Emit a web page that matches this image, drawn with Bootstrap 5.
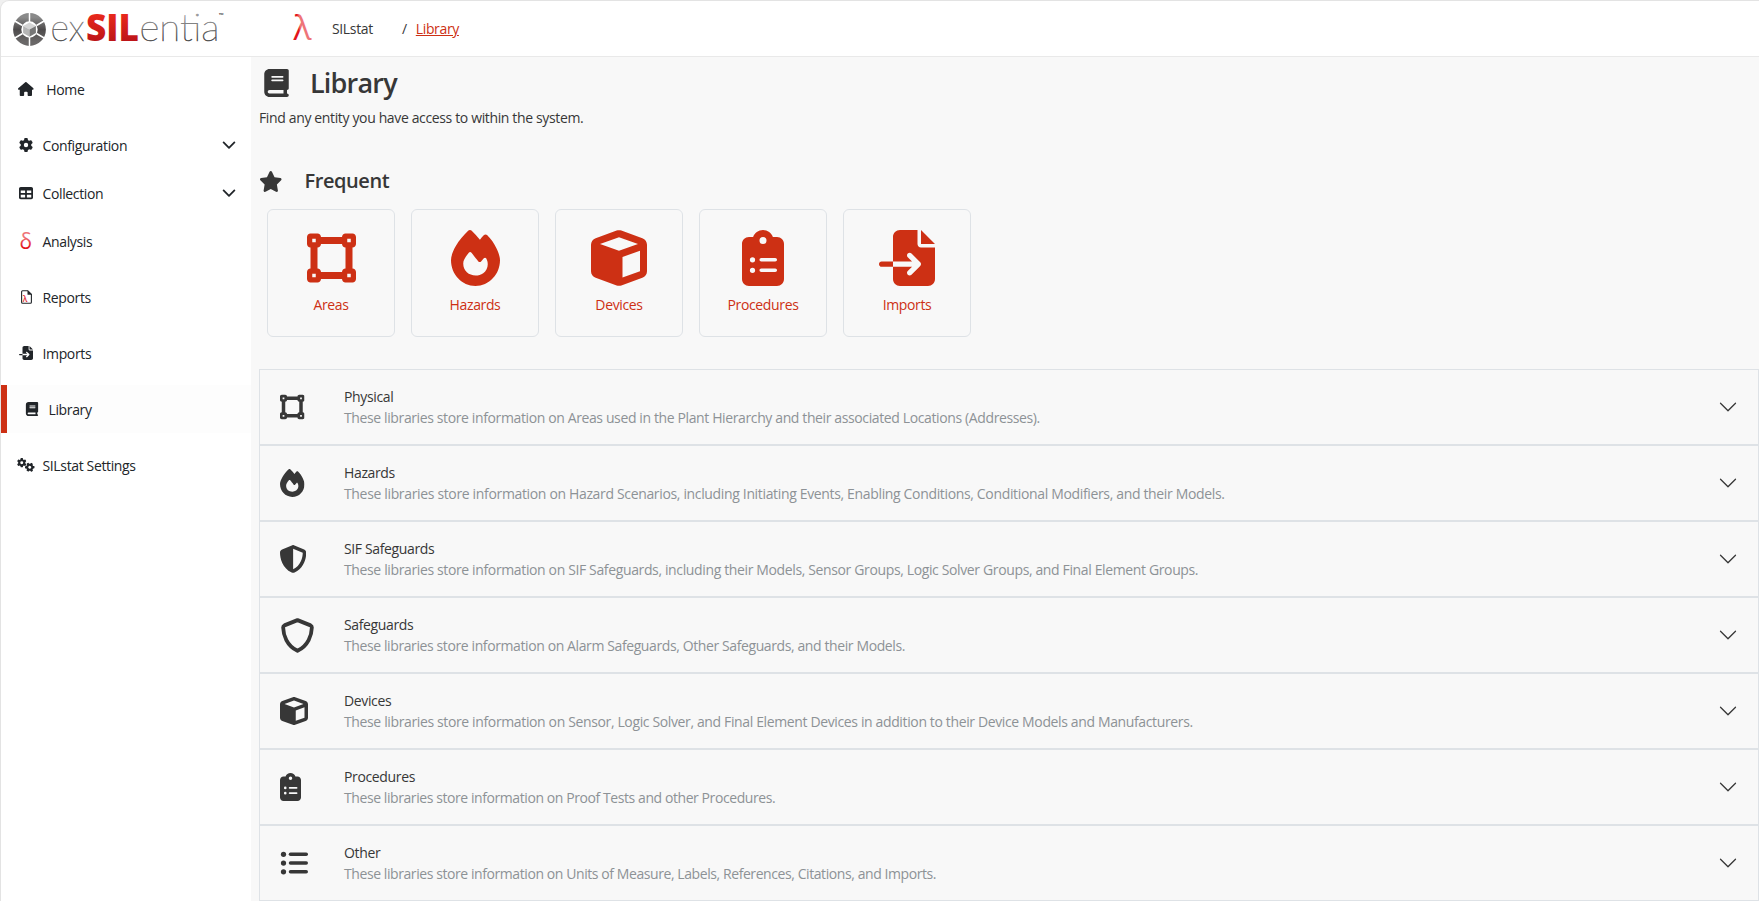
<!DOCTYPE html>
<html lang="en">
<head>
<meta charset="utf-8">
<title>Library - SILstat</title>
<link href="https://cdn.jsdelivr.net/npm/bootstrap@5.3.0/dist/css/bootstrap.min.css" rel="stylesheet">
<style>
:root{--brand:#cd3014;--ink:#373737;--line:#dee2e6}
body{font-family:"Open Sans","Noto Sans",sans-serif;font-size:14px;line-height:21px;letter-spacing:-.36px;color:var(--ink);background:#f0f0f0;height:901px;overflow:hidden}
svg{display:block;flex:none;fill:currentColor}
.shell{height:901px;border:solid #e3e3e3;border-width:1px 0 0 1px;border-top-left-radius:9px;background:#fff;overflow:hidden}
.topbar{height:56px;border-bottom:1px solid #e9e9e9}
.brand-area{width:251px;padding-left:11px}
.side{width:250px;padding-top:8px;color:#212529}
.side a{height:48px;color:inherit;text-decoration:none;padding-left:18px}
.side a.gap-after{margin-bottom:8px}
.side .ico{width:23.5px}
.side a.active{border-left:6px solid var(--brand);background:#fdfdfd}
.main-area{background:#f8f8f8;padding-left:8px;min-width:0}
.page-head{height:152px;padding-top:9px}
.tile{width:128px;height:128px;border:1px solid var(--line);border-radius:6px;color:var(--brand);text-decoration:none;padding-top:20px}
.tile span{margin-top:8px}
.lib-item{height:76px;border:1px solid var(--line);padding:0 20px}
.lib-item .ico{width:64px}
.lib-item p{color:#8d9296;letter-spacing:-.38px}
.lib-item:nth-child(2) p{letter-spacing:-.344px}
.lib-item:nth-child(3) p,.lib-item:nth-child(5) p{letter-spacing:-.367px}
.lib-item:nth-child(4) p{letter-spacing:-.395px}
.lib-item:nth-child(n+6) p{letter-spacing:-.42px}
.t1{font-size:27px;line-height:34px;font-weight:600;letter-spacing:-.8px}
.t2{font-size:20px;line-height:26px;font-weight:600;letter-spacing:-.42px}
.crumb{color:var(--brand)}
</style>
</head>
<body>
<svg width="0" height="0" class="position-absolute top-0">
<defs>
<linearGradient id="gGray" x1="0" y1="0" x2="0" y2="1"><stop offset=".3" stop-color="#999"/><stop offset=".8" stop-color="#4c4c4c"/></linearGradient>
<linearGradient id="gRed" x1="0" y1="0" x2="0" y2="1"><stop offset=".25" stop-color="#e8281c"/><stop offset=".85" stop-color="#b71218"/></linearGradient>
<linearGradient id="gRing" x1="0" y1="0" x2="0" y2="1"><stop offset="0" stop-color="#8a8a8a"/><stop offset=".5" stop-color="#4d4a4b"/><stop offset="1" stop-color="#6a6868"/></linearGradient>
<linearGradient id="gLam" x1="0" y1="1" x2="1" y2=".75"><stop offset=".38" stop-color="#e3141c"/><stop offset=".5" stop-color="#ee7478"/></linearGradient>
<linearGradient id="gDel" x1="0" y1="0" x2="0" y2="1"><stop offset=".4" stop-color="#ee7478"/><stop offset=".75" stop-color="#e3141c"/></linearGradient>
</defs>
<symbol id="book" viewBox="0 0 448 512"><path fill-rule="evenodd" d="M96 0C43 0 0 43 0 96V416c0 53 43 96 96 96H416c17.700 0 32-14.300 32-32s-14.300-32-32-32V384c17.700 0 32-14.300 32-32V32c0-17.700-14.300-32-32-32H96zm0 384H352v64H96c-17.700 0-32-14.300-32-32s14.300-32 32-32zM128 144c0-8.800 7.200-16 16-16H336c8.800 0 16 7.200 16 16s-7.200 16-16 16H144c-8.800 0-16-7.200-16-16zm16 48H336c8.800 0 16 7.200 16 16s-7.200 16-16 16H144c-8.800 0-16-7.200-16-16s7.200-16 16-16z"/></symbol>
<symbol id="star" viewBox="0 0 576 512"><path d="M316.900 18C311.600 7 300.400 0 288.100 0s-23.400 7-28.800 18L195 150.300 51.400 171.500c-12 1.800-22 10.200-25.700 21.700s-.7 24.200 7.900 32.700L137.800 329 113.200 474.700c-2 12 3 24.200 12.900 31.300s23 8 33.800 2.300l128.300-68.500 128.300 68.500c10.800 5.700 23.900 4.900 33.800-2.300s14.900-19.300 12.900-31.300L438.500 329 542.700 225.900c8.600-8.500 11.700-21.200 7.900-32.700s-13.700-19.900-25.700-21.700L381.200 150.300 316.900 18z"/></symbol>
<symbol id="area" viewBox="0 0 448 512"><path fill-rule="evenodd" d="M352 32c-17.700 0-32 14.300-32 32H128c0-17.700-14.300-32-32-32H32C14.300 32 0 46.300 0 64v64c0 17.700 14.300 32 32 32V352c-17.700 0-32 14.300-32 32v64c0 17.700 14.300 32 32 32H96c17.700 0 32-14.300 32-32H320c0 17.700 14.300 32 32 32h64c17.700 0 32-14.300 32-32V384c0-17.700-14.300-32-32-32V160c17.700 0 32-14.300 32-32V64c0-17.700-14.300-32-32-32H352zM96 160c17.700 0 32-14.300 32-32H320c0 17.700 14.300 32 32 32V352c-17.700 0-32 14.300-32 32H128c0-17.700-14.300-32-32-32V160zM48 80H80v32H48zM368 80h32v32H368zM48 400H80v32H48zM368 400h32v32H368z"/></symbol>
<symbol id="fire" viewBox="0 0 448 512"><path fill-rule="evenodd" d="M159.300 5.400c7.800-7.300 19.900-7.200 27.700 .1c27.600 25.900 53.500 53.800 77.700 84c11-14.400 23.500-30.100 37-42.900c7.900-7.400 20.100-7.400 28 .1c34.600 33 63.900 76.600 84.500 118c20.300 40.800 33.800 82.500 33.800 111.900C448 404.200 348.200 512 224 512C98.400 512 0 404.100 0 276.500c0-38.400 17.800-85.300 45.400-131.700C73.300 97.700 112.700 48.600 159.300 5.400zM225.700 416c25.300 0 47.700-7 68.800-21c42.100-29.400 53.400-88.200 28.100-134.400c-4.500-9-16-9.600-22.500-2l-25.200 29.300c-6.600 7.600-18.500 7.400-24.700-.5c-16.500-21-46-58.500-62.800-79.800c-6.300-8-18.300-8.100-24.700-.1c-33.800 42.500-50.800 69.300-50.800 99.400C112 375.400 162.600 416 225.700 416z"/></symbol>
<symbol id="cube" viewBox="0 0 512 512"><path fill-rule="evenodd" d="M234.500 5.700c13.900-5 29.100-5 43.100 0l192 68.600C495 83.400 512 107.500 512 134.600V377.400c0 27-17 51.200-42.500 60.300l-192 68.600c-13.900 5-29.100 5-43.100 0l-192-68.600C17 428.600 0 404.500 0 377.400V134.600c0-27 17-51.200 42.500-60.300l192-68.600zM256 66L82.300 128 256 190l173.700-62L256 66zm32 368.600l160-57.100v-188L288 246.600v188z"/></symbol>
<symbol id="clip" viewBox="0 0 384 512"><path fill-rule="evenodd" d="M192 0c-41.800 0-77.400 26.700-90.500 64H64C28.700 64 0 92.700 0 128V448c0 35.300 28.700 64 64 64H320c35.300 0 64-28.700 64-64V128c0-35.300-28.700-64-64-64H282.500C269.400 26.700 233.800 0 192 0zm0 64a32 32 0 1 1 0 64 32 32 0 1 1 0-64zM72 272a24 24 0 1 1 48 0 24 24 0 1 1 -48 0zm104-16H304c8.800 0 16 7.200 16 16s-7.200 16-16 16H176c-8.800 0-16-7.200-16-16s7.200-16 16-16zM72 368a24 24 0 1 1 48 0 24 24 0 1 1 -48 0zm88 0c0-8.800 7.200-16 16-16H304c8.800 0 16 7.200 16 16s-7.200 16-16 16H176c-8.800 0-16-7.200-16-16z"/></symbol>
<symbol id="import" viewBox="0 0 512 512"><path d="M128 64c0-35.300 28.700-64 64-64H352V128c0 17.700 14.300 32 32 32H512V448c0 35.300-28.700 64-64 64H192c-35.300 0-64-28.700-64-64V336H302.100l-39 39c-9.400 9.400-9.400 24.600 0 33.900s24.600 9.400 33.900 0l80-80c9.400-9.400 9.400-24.600 0-33.900l-80-80c-9.400-9.400-24.600-9.400-33.900 0s-9.400 24.600 0 33.900l39 39H128V64zm0 224v48H24c-13.300 0-24-10.700-24-24s10.700-24 24-24H128zM512 128H384V0L512 128z"/></symbol>
<symbol id="halfshield" viewBox="16 0 480 512"><path fill-rule="evenodd" d="M256 0c4.600 0 9.200 1 13.400 2.900L457.700 82.800c22 9.300 38.400 31 38.300 57.200c-.5 99.200-41.300 280.700-213.600 363.200c-16.700 8-36.100 8-52.800 0C57.300 420.700 16.500 239.200 16 140c-.1-26.200 16.300-47.900 38.300-57.200L242.700 2.900C246.800 1 251.400 0 256 0zm0 66.800V444.800C394 378 431.100 230.100 432 141.400L256 66.800z"/></symbol>
<symbol id="shield" viewBox="16 0 480 512"><path fill="none" stroke="currentColor" stroke-width="56" stroke-linejoin="round" d="M256 31L447 108Q466 117 466 140C463 250 414 405 256 480C98 405 49 250 46 140Q46 117 65 108Z"/></symbol>
<symbol id="list" viewBox="0 0 512 512"><circle cx="64" cy="96" r="48"/><circle cx="64" cy="256" r="48"/><circle cx="64" cy="416" r="48"/><rect x="160" y="64" width="352" height="64" rx="32"/><rect x="160" y="224" width="352" height="64" rx="32"/><rect x="160" y="384" width="352" height="64" rx="32"/></symbol>
<symbol id="home" viewBox="0 0 576 512"><path d="M575.800 255.500c0 18-15 32.100-32 32.100h-32l.7 160.200c0 2.700-.2 5.400-.5 8.100V472c0 22.100-17.900 40-40 40H392c-22.100 0-40-17.900-40-40V384c0-17.700-14.300-32-32-32H256c-17.700 0-32 14.300-32 32v88c0 22.100-17.900 40-40 40H104c-22.100 0-40-17.900-40-40V287.600H32c-18 0-32-14-32-32.100c0-9 3-17 10-24L266.400 8c7-7 15-8 22-8s15 2 21 7L564.800 231.500c8 7 12 15 11 24z"/></symbol>
<symbol id="gear" viewBox="0 0 512 512"><path fill-rule="evenodd" d="M495.900 166.600c3.200 8.700 .5 18.400-6.400 24.600l-43.300 39.400c1.100 8.300 1.700 16.800 1.700 25.400s-.6 17.100-1.700 25.400l43.300 39.400c6.900 6.200 9.600 15.900 6.400 24.600c-4.400 11.900-9.700 23.300-15.800 34.300l-4.700 8.100c-6.600 11-14 21.400-22.100 31.200c-5.900 7.200-15.700 9.600-24.500 6.800l-55.700-17.700c-13.400 10.300-28.200 18.900-44 25.400l-12.500 57.100c-2 9.100-9 16.300-18.200 17.800c-13.800 2.300-28 3.500-42.500 3.500s-28.700-1.200-42.500-3.500c-9.200-1.500-16.200-8.700-18.200-17.800l-12.500-57.100c-15.800-6.500-30.600-15.100-44-25.400L83.100 425.900c-8.800 2.800-18.600 .3-24.500-6.800c-8.100-9.800-15.500-20.200-22.100-31.200l-4.700-8.100c-6.100-11-11.400-22.400-15.800-34.300c-3.200-8.700-.5-18.400 6.400-24.600l43.300-39.400C64.600 273.100 64 264.600 64 256s.6-17.100 1.700-25.400L22.400 191.200c-6.900-6.200-9.600-15.900-6.400-24.600c4.400-11.900 9.700-23.300 15.800-34.300l4.700-8.100c6.600-11 14-21.400 22.100-31.200c5.900-7.200 15.700-9.600 24.500-6.800l55.700 17.700c13.400-10.300 28.200-18.900 44-25.400l12.500-57.100c2-9.100 9-16.300 18.200-17.800C227.300 1.200 241.500 0 256 0s28.700 1.200 42.500 3.500c9.200 1.500 16.200 8.700 18.200 17.800l12.500 57.100c15.800 6.500 30.600 15.100 44 25.400l55.700-17.700c8.800-2.800 18.600-.3 24.500 6.800c8.100 9.800 15.500 20.200 22.100 31.200l4.700 8.100c6.100 11 11.400 22.400 15.800 34.300zM256 336a80 80 0 1 0 0-160 80 80 0 1 0 0 160z"/></symbol>
<symbol id="grid" viewBox="0 0 512 512"><path fill-rule="evenodd" d="M64 32C28.700 32 0 60.700 0 96V416c0 35.300 28.700 64 64 64H448c35.300 0 64-28.700 64-64V96c0-35.300-28.700-64-64-64H64zM64 160H224v96H64zM64 320H224v96H64zM288 320H448v96H288zM288 160H448v96H288z"/></symbol>
<symbol id="chev" viewBox="0 0 16 16"><path d="M1.646 4.646a.5.5 0 0 1 .708 0L8 10.293l5.646-5.647a.5.5 0 0 1 .708.708l-6 6a.5.5 0 0 1-.708 0l-6-6a.5.5 0 0 1 0-.708z"/></symbol>
<symbol id="chevs" viewBox="0 0 14 14"><path fill="none" stroke="currentColor" stroke-width="1.800" stroke-linecap="round" stroke-linejoin="round" d="M1.600 4.400L7 9.800l5.400-5.400"/></symbol>
</svg>

<div class="shell d-flex flex-column">
  <header class="topbar d-flex align-items-center flex-shrink-0">
    <div class="brand-area">
      <svg width="230" height="54" viewBox="12 1 230 54">
        <circle cx="29.500" cy="28.500" r="12.300" fill="none" stroke="url(#gRing)" stroke-width="8.200"/>
        <path d="M29.500 11v10M29.500 36v10M14 19.500l8.500 5M45 19.500l-8.500 5M14 37.500l8.500-5M45 37.500l-8.500-5" stroke="#fff" stroke-width="1.500"/>
        <path d="M29.500 21.500l6.400 3.500-6.400 3.500-6.400-3.500z" fill="#d4d4d4"/><path d="M23.100 25l6.400 3.500v7.200l-6.400-3.600z" fill="#b5b5b5"/><path d="M35.900 25l-6.400 3.500v7.200l6.400-3.600z" fill="#777"/>
        <g font-family="Lato,'Open Sans',sans-serif" letter-spacing="0">
          <text x="50.500" y="40" font-size="38" font-weight="100" fill="url(#gGray)" stroke="url(#gGray)" stroke-width=".6" textLength="34" lengthAdjust="spacingAndGlyphs">ex</text>
          <text x="86" y="40" font-size="36.500" font-weight="800" font-family="'Open Sans'" fill="url(#gRed)" textLength="53" lengthAdjust="spacingAndGlyphs">SIL</text>
          <text x="139.500" y="40" font-size="38" font-weight="100" fill="url(#gGray)" stroke="url(#gGray)" stroke-width=".6" textLength="80" lengthAdjust="spacingAndGlyphs">entia</text>
          <text x="218.500" y="17" font-size="6.500" font-weight="700" fill="#555">™</text>
        </g>
      </svg>
    </div>
    <svg width="24" height="50" viewBox="0 -8 24 50" style="margin-left:39px"><text x="2.500" y="27.500" font-size="34" letter-spacing="0" font-family="Open Sans" fill="url(#gLam)" textLength="18" lengthAdjust="spacingAndGlyphs">λ</text></svg>
    <span style="width:70px;margin-left:17px">SILstat</span>
    <span style="margin-right:9px">/</span><a class="crumb" href="#">Library</a>
  </header>

  <div class="d-flex flex-grow-1" style="min-height:0">
    <nav class="side d-flex flex-column flex-shrink-0">
      <a href="#" class="gap-after d-flex align-items-center"><svg width="15.750" height="14" style="margin:0 12.500px 0 -1px"><use href="#home"/></svg>Home</a>
      <a href="#" class="d-flex align-items-center"><span class="ico"><svg width="14" height="14"><use href="#gear"/></svg></span>Configuration<svg class="ms-auto" style="margin-right:15px" width="14" height="14"><use href="#chevs"/></svg></a>
      <a href="#" class="d-flex align-items-center"><span class="ico"><svg width="14" height="14"><use href="#grid"/></svg></span>Collection<svg class="ms-auto" style="margin-right:15px" width="14" height="14"><use href="#chevs"/></svg></a>
      <a href="#" class="gap-after d-flex align-items-center"><span class="ico"><svg width="14" height="28" viewBox="0 -5 14 28"><text x="0.500" y="16.500" font-size="21.500" letter-spacing="0" font-family="Open Sans" fill="url(#gDel)" textLength="12.500" lengthAdjust="spacingAndGlyphs">δ</text></svg></span>Analysis</a>
      <a href="#" class="gap-after d-flex align-items-center"><span class="ico"><svg width="14" height="14" viewBox="0 0 14 14"><path d="M2.600 1.700q0-1 1-1h5.200l3.600 3.600v8q0 1-1 1H3.600q-1 0-1-1z" fill="none" stroke="currentColor" stroke-width="1.100"/><path d="M8.500.5l4.200 4.200H8.500z"/><text x="3.800" y="12.400" font-size="8" font-weight="600" fill="#e02a30">λ</text></svg></span>Reports</a>
      <a href="#" class="gap-after d-flex align-items-center"><span class="ico"><svg width="14" height="14"><use href="#import"/></svg></span>Imports</a>
      <a href="#" class="gap-after active d-flex align-items-center"><span class="ico ps-0"><svg width="14" height="14"><use href="#book"/></svg></span>Library</a>
      <a href="#" class="d-flex align-items-center"><span class="ico"><svg width="18" height="14" viewBox="0 0 18 14" style="margin-left:-2px"><use href="#gear" width="9.500" height="9.500"/><use href="#gear" x="8" y="4.500" width="9.500" height="9.500" transform="rotate(30 12.750 9.250)"/></svg></span>SILstat Settings</a>
    </nav>

    <main class="main-area flex-grow-1">
      <div class="page-head d-flex flex-column">
        <div class="d-flex align-items-center" style="padding-left:5px"><svg width="25" height="28"><use href="#book"/></svg><h1 class="t1 mb-0" style="margin-left:21px">Library</h1></div>
        <p class="mb-0" style="margin-top:7px">Find any entity you have access to within the system.</p>
        <div class="d-flex align-items-center mt-auto" style="margin-bottom:15px"><svg width="23.500" height="21"><use href="#star"/></svg><h2 class="t2 mb-0" style="margin-left:22px">Frequent</h2></div>
      </div>
      <div class="d-flex gap-3 ps-2">
        <a href="#" class="tile d-flex flex-column align-items-center"><svg width="49" height="56"><use href="#area"/></svg><span>Areas</span></a>
        <a href="#" class="tile d-flex flex-column align-items-center"><svg width="49" height="56"><use href="#fire"/></svg><span>Hazards</span></a>
        <a href="#" class="tile d-flex flex-column align-items-center"><svg width="56" height="56"><use href="#cube"/></svg><span>Devices</span></a>
        <a href="#" class="tile d-flex flex-column align-items-center"><svg width="42" height="56"><use href="#clip"/></svg><span>Procedures</span></a>
        <a href="#" class="tile d-flex flex-column align-items-center"><svg width="56" height="56"><use href="#import"/></svg><span>Imports</span></a>
      </div>
      <div style="margin-top:32px">
        <div class="lib-item d-flex align-items-center"><div class="ico"><svg width="24.500" height="28"><use href="#area"/></svg></div><div>Physical<p class="mb-0">These libraries store information on Areas used in the Plant Hierarchy and their associated Locations (Addresses).</p></div><svg class="ms-auto" width="20" height="20"><use href="#chev"/></svg></div>
        <div class="lib-item d-flex align-items-center"><div class="ico"><svg width="24.500" height="28"><use href="#fire"/></svg></div><div>Hazards<p class="mb-0">These libraries store information on Hazard Scenarios, including Initiating Events, Enabling Conditions, Conditional Modifiers, and their Models.</p></div><svg class="ms-auto" width="20" height="20"><use href="#chev"/></svg></div>
        <div class="lib-item d-flex align-items-center"><div class="ico"><svg width="26.250" height="28"><use href="#halfshield"/></svg></div><div>SIF Safeguards<p class="mb-0">These libraries store information on SIF Safeguards, including their Models, Sensor Groups, Logic Solver Groups, and Final Element Groups.</p></div><svg class="ms-auto" width="20" height="20"><use href="#chev"/></svg></div>
        <div class="lib-item d-flex align-items-center"><div class="ico"><svg width="33" height="35" style="margin-left:1px"><use href="#shield"/></svg></div><div>Safeguards<p class="mb-0">These libraries store information on Alarm Safeguards, Other Safeguards, and their Models.</p></div><svg class="ms-auto" width="20" height="20"><use href="#chev"/></svg></div>
        <div class="lib-item d-flex align-items-center"><div class="ico"><svg width="28" height="28"><use href="#cube"/></svg></div><div>Devices<p class="mb-0">These libraries store information on Sensor, Logic Solver, and Final Element Devices in addition to their Device Models and Manufacturers.</p></div><svg class="ms-auto" width="20" height="20"><use href="#chev"/></svg></div>
        <div class="lib-item d-flex align-items-center"><div class="ico"><svg width="21" height="28"><use href="#clip"/></svg></div><div>Procedures<p class="mb-0">These libraries store information on Proof Tests and other Procedures.</p></div><svg class="ms-auto" width="20" height="20"><use href="#chev"/></svg></div>
        <div class="lib-item d-flex align-items-center"><div class="ico"><svg width="28" height="28"><use href="#list"/></svg></div><div>Other<p class="mb-0">These libraries store information on Units of Measure, Labels, References, Citations, and Imports.</p></div><svg class="ms-auto" width="20" height="20"><use href="#chev"/></svg></div>
      </div>
    </main>
  </div>
</div>
<script src="https://cdn.jsdelivr.net/npm/bootstrap@5.3.0/dist/js/bootstrap.bundle.min.js"></script>
</body>
</html>
